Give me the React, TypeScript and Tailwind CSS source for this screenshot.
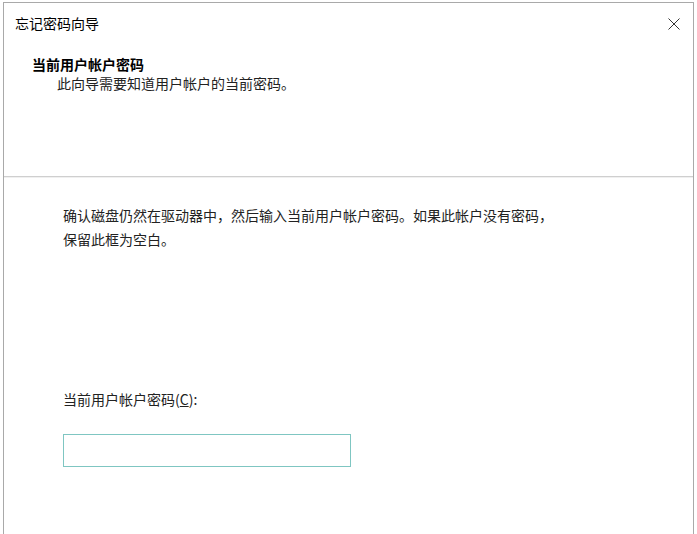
import React from 'react';

const font = { fontFamily: '"Noto Sans CJK SC", "Noto Sans", sans-serif' };

export default function App() {
  return (
    <div className="w-[697px] h-[534px] bg-white overflow-hidden" style={font}>
      {/* Wizard window */}
      <div className="ml-[3px] mt-[2px] w-[691px] h-[540px] border-l border-r border-t border-[#a9a9a9] bg-white flex flex-col">
        {/* Title bar */}
        <div className="h-[38px] flex items-start justify-between pl-[11px] pr-[13px] pt-[9px]">
          <span className="text-[14px] leading-[22px] text-black">忘记密码向导</span>
          <svg className="mt-[6px]" width="12" height="12" viewBox="0 0 12 12" fill="none" stroke="#333" strokeWidth="1">
            <path d="M0.5 0.5L11.5 11.5M11.5 0.5L0.5 11.5" />
          </svg>
        </div>

        {/* Header */}
        <div className="h-[136px] pl-[28px] pt-[13px] border-b border-[#cfcfcf]">
          <div className="text-[14px] leading-[20px] font-bold text-black">当前用户帐户密码</div>
          <div className="text-[14px] leading-[19px] text-[#222] pl-[25px]">此向导需要知道用户帐户的当前密码。</div>
        </div>
        <div className="h-px bg-[#f0f0f0]" />

        {/* Body */}
        <div className="pl-[59px] pt-[25px] flex flex-col">
          <p className="text-[14px] leading-[24px] text-[#222] w-[500px]">
            确认磁盘仍然在驱动器中，然后输入当前用户帐户密码。如果此帐户没有密码，
            <br />
            保留此框为空白。
          </p>
          <label className="mt-[136px] text-[14px] leading-[24px] text-[#222]">
            当前用户帐户密码(<span className="underline">C</span>):
          </label>
          <input
            type="password"
            className="mt-[23px] w-[288px] h-[33px] border border-[#7fc6c2] outline-none px-2 text-[14px]"
          />
        </div>
      </div>
    </div>
  );
}
